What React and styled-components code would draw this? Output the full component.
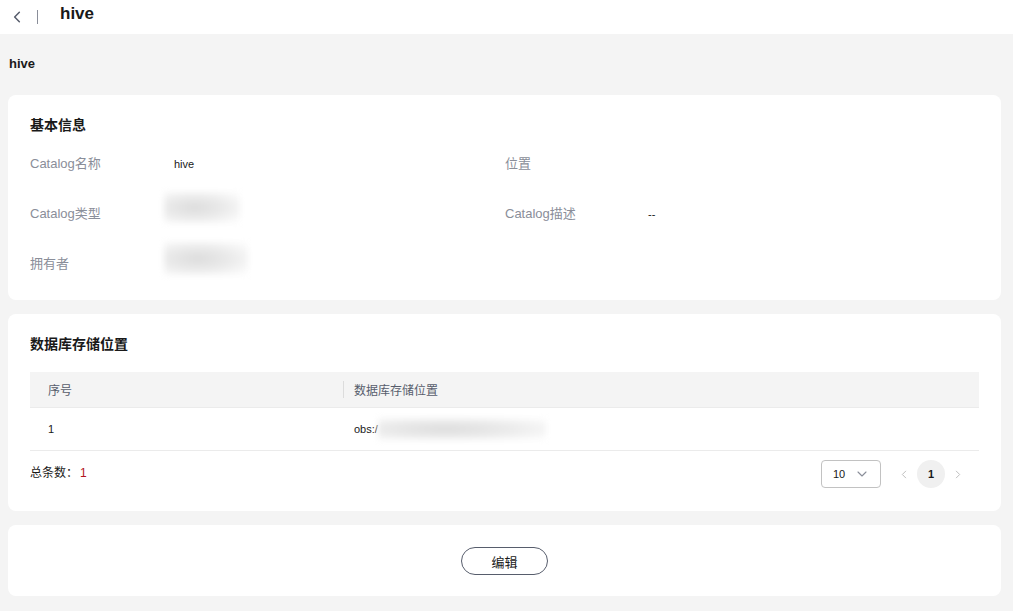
import React from 'react';
import styled, { createGlobalStyle } from 'styled-components';

const GlobalStyle = createGlobalStyle`
  html, body {
    margin: 0;
    padding: 0;
    background: #f4f4f4;
    font-family: "Liberation Sans", Arial, "Noto Sans CJK SC", sans-serif;
    color: #191919;
  }
`;

const Header = styled.header`
  height: 34px;
  background: #fff;
  display: flex;
  align-items: center;
  padding-left: 10px;
`;

const BackButton = styled.span`
  display: flex;
  align-items: center;
  width: 14px;
  color: #575d6c;
`;

const Divider = styled.span`
  width: 1px;
  height: 14px;
  background: #8a8e99;
  margin: 0 22px 0 13px;
`;

const PageTitle = styled.h1`
  margin: 0;
  font-size: 17px;
  font-weight: 700;
  line-height: 20px;
  margin-top: -6px;
`;

const Main = styled.main`
  padding: 0 12px 15px 8px;
  display: flex;
  flex-direction: column;
  gap: 14px;
`;

const SubTitle = styled.div`
  font-size: 13px;
  font-weight: 700;
  line-height: 20px;
  padding: 20px 0 7px 1px;
`;

const Card = styled.section`
  background: #fff;
  border-radius: 8px;
  padding: ${(p) => p.$padding || '20px 22px 22px'};
  display: flex;
  flex-direction: column;
  align-items: ${(p) => (p.$center ? 'center' : 'stretch')};
`;

const CardTitle = styled.h2`
  margin: 0;
  font-size: 14px;
  font-weight: 700;
  line-height: 20px;
`;

const InfoGrid = styled.div`
  display: grid;
  grid-template-columns: 134px 341px 143px 1fr;
  grid-auto-rows: 20px;
  row-gap: 30px;
  margin-top: 17px;
  margin-bottom: 6px;
`;

const Label = styled.div`
  font-size: 13px;
  line-height: 20px;
  color: #8a8e99;
  margin-top: 2px;
`;

const Value = styled.div`
  font-size: 11px;
  line-height: 20px;
  color: #191919;
  padding-left: ${(p) => p.$indent || 0}px;
  margin-top: 2px;
`;

const Blur = styled.div`
  width: ${(p) => p.$w}px;
  height: ${(p) => p.$h}px;
  margin-top: ${(p) => p.$top}px;
  background: radial-gradient(ellipse at 40% 50%, #dcdcdc 0%, #eaeaea 45%, #f6f6f6 75%, #fff 100%);
  filter: blur(3px);
`;

const Table = styled.div`
  margin-top: 18px;
  display: flex;
  flex-direction: column;
`;

const Row = styled.div`
  display: grid;
  grid-template-columns: 313px 1fr;
  align-items: center;
  height: ${(p) => (p.$head ? 35 : 42)}px;
  background: ${(p) => (p.$head ? '#f4f4f4' : '#fff')};
  border-bottom: 1px solid #ebebeb;
  font-size: ${(p) => (p.$head ? 12 : 11)}px;
  color: ${(p) => (p.$head ? '#575d6c' : '#191919')};
`;

const Cell = styled.div`
  display: flex;
  align-items: center;
  height: 100%;
  padding-left: ${(p) => (p.$first ? 18 : 11)}px;
  position: relative;

  ${(p) =>
    p.$sep &&
    `&::before {
      content: '';
      position: absolute;
      left: 0;
      top: 9px;
      bottom: 9px;
      width: 1px;
      background: #dcdcdc;
    }`}
`;

const Footer = styled.div`
  display: flex;
  align-items: center;
  margin-top: 9px;
  height: 28px;
`;

const Total = styled.div`
  flex: 1;
  font-size: 12px;
  color: #191919;
  margin-top: -5px;
`;

const TotalCount = styled.span`
  color: #b2141c;
  margin-left: 2px;
`;

const Select = styled.div`
  width: 60px;
  height: 28px;
  box-sizing: border-box;
  border: 1px solid #c2c2c2;
  border-radius: 4px;
  display: flex;
  align-items: center;
  justify-content: space-between;
  padding: 0 12px 0 11px;
  font-size: 11px;
  color: #191919;

  svg {
    color: #8a8e99;
  }
`;

const Pager = styled.div`
  display: flex;
  align-items: center;
  gap: 8px;
  margin-left: 18px;
  margin-right: 16px;
`;

const PageArrow = styled.span`
  display: flex;
  color: #bfbfbf;
  width: 10px;
  justify-content: center;
`;

const PageNum = styled.span`
  width: 28px;
  height: 28px;
  border-radius: 50%;
  background: #f0f0f0;
  display: flex;
  align-items: center;
  justify-content: center;
  font-size: 11px;
  font-weight: 700;
  color: #191919;
`;

const EditButton = styled.button`
  width: 87px;
  height: 28px;
  border: 1px solid #575d6c;
  border-radius: 14px;
  background: #fff;
  font-family: inherit;
  font-size: 13px;
  color: #191919;
  cursor: pointer;
`;

const Chevron = ({ dir = 'left', size = 12, stroke = 1.4 }) => {
  const d = {
    left: 'M8 2 L4 6 L8 10',
    right: 'M4 2 L8 6 L4 10',
    down: 'M2 4 L6 8 L10 4',
  }[dir];
  return (
    <svg width={size} height={size} viewBox="0 0 12 12" fill="none">
      <path d={d} stroke="currentColor" strokeWidth={stroke} strokeLinecap="round" strokeLinejoin="round" />
    </svg>
  );
};

const App = () => {
  return (
    <>
      <GlobalStyle />
      <Header>
        <BackButton>
          <Chevron dir="left" size={14} stroke={1.3} />
        </BackButton>
        <Divider />
        <PageTitle>hive</PageTitle>
      </Header>

      <Main>
        <SubTitle>hive</SubTitle>

        <Card>
          <CardTitle>基本信息</CardTitle>
          <InfoGrid>
            <Label>Catalog名称</Label>
            <Value $indent={10}>hive</Value>
            <Label>位置</Label>
            <Value />

            <Label>Catalog类型</Label>
            <Value>
              <Blur $w={76} $h={31} $top={-12} />
            </Value>
            <Label>Catalog描述</Label>
            <Value>--</Value>

            <Label>拥有者</Label>
            <Value>
              <Blur $w={84} $h={33} $top={-12} />
            </Value>
            <Label />
            <Value />
          </InfoGrid>
        </Card>

        <Card $padding="20px 22px 23px">
          <CardTitle>数据库存储位置</CardTitle>
          <Table>
            <Row $head>
              <Cell $first>序号</Cell>
              <Cell $sep>数据库存储位置</Cell>
            </Row>
            <Row>
              <Cell $first>1</Cell>
              <Cell>
                obs:/
                <Blur $w={168} $h={22} $top={0} />
              </Cell>
            </Row>
          </Table>
          <Footer>
            <Total>
              总条数：<TotalCount>1</TotalCount>
            </Total>
            <Select>
              <span>10</span>
              <Chevron dir="down" size={12} stroke={1.1} />
            </Select>
            <Pager>
              <PageArrow>
                <Chevron dir="left" size={11} stroke={1.2} />
              </PageArrow>
              <PageNum>1</PageNum>
              <PageArrow>
                <Chevron dir="right" size={11} stroke={1.2} />
              </PageArrow>
            </Pager>
          </Footer>
        </Card>

        <Card $center $padding="22px 22px 21px">
          <EditButton>编辑</EditButton>
        </Card>
      </Main>
    </>
  );
};

export default App;
